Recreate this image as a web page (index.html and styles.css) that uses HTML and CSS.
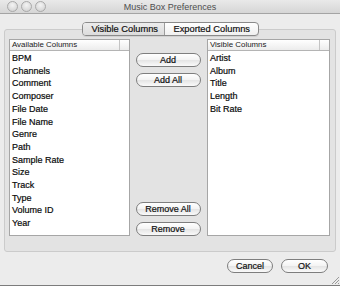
FILE: index.html
```html
<!DOCTYPE html>
<html lang="en">

<head>
    <meta charset="UTF-8">
    <meta name="viewport" content="width=device-width, initial-scale=1.0">
    <title>Music Box Preferences</title>
    <link rel="stylesheet" href="styles.css">
</head>

<body>
    <div class="window">
        <div class="titlebar">
            <div class="lights">
                <span class="light"></span>
                <span class="light"></span>
                <span class="light"></span>
            </div>
            <div class="title">Music Box Preferences</div>
        </div>

        <div class="tabs-row">
            <div class="tabs">
                <div class="tab selected">Visible Columns</div>
                <div class="tab">Exported Columns</div>
            </div>
        </div>

        <div class="group">
            <div class="list">
                <div class="list-head">
                    <span class="head-label">Available Columns</span>
                    <span class="head-corner"></span>
                </div>
                <div class="list-body">
                    <div>BPM</div>
                    <div>Channels</div>
                    <div>Comment</div>
                    <div>Composer</div>
                    <div>File Date</div>
                    <div>File Name</div>
                    <div>Genre</div>
                    <div>Path</div>
                    <div>Sample Rate</div>
                    <div>Size</div>
                    <div>Track</div>
                    <div>Type</div>
                    <div>Volume ID</div>
                    <div>Year</div>
                </div>
            </div>

            <div class="actions">
                <div class="action-group">
                    <button class="btn">Add</button>
                    <button class="btn">Add All</button>
                </div>
                <div class="action-group">
                    <button class="btn">Remove All</button>
                    <button class="btn">Remove</button>
                </div>
            </div>

            <div class="list">
                <div class="list-head">
                    <span class="head-label">Visible Columns</span>
                    <span class="head-corner"></span>
                </div>
                <div class="list-body">
                    <div>Artist</div>
                    <div>Album</div>
                    <div>Title</div>
                    <div>Length</div>
                    <div>Bit Rate</div>
                </div>
            </div>
        </div>

        <div class="footer">
            <button class="btn small">Cancel</button>
            <button class="btn small">OK</button>
        </div>

        <svg class="grip" width="9" height="9" viewBox="0 0 9 9">
            <path d="M1 8 L8 1 M4 8 L8 4 M7 8 L8 7" stroke="#9a9a9a" stroke-width="1" fill="none"/>
        </svg>
    </div>
</body>

</html>
```

FILE: styles.css
```css
html,
body {
    padding: 0;
    margin: 0;
}

body {
    width: 340px;
    height: 286px;
    overflow: hidden;
    background-color: #ececec;
    font-family: "Liberation Sans", Arial, sans-serif;
    color: #111;
}

.window {
    position: relative;
    height: 285px;
    border-bottom: 1px solid #7c7c7c;
    display: flex;
    flex-direction: column;
}

.titlebar {
    position: relative;
    height: 13px;
    background: linear-gradient(#e9e9e9, #d6d6d6);
    border-bottom: 1px solid #a4a4a4;
    display: flex;
    align-items: center;
}

.lights {
    display: flex;
    gap: 3px;
    padding-left: 7px;
}

.light {
    width: 9px;
    height: 9px;
    border-radius: 50%;
    border: 1px solid #a9a9a9;
    background: radial-gradient(circle at 50% 35%, #f4f4f4, #cdcdcd);
    box-sizing: content-box;
}

.title {
    position: absolute;
    left: 0;
    right: 0;
    top: 1px;
    text-align: center;
    font-size: 9px;
    line-height: 12px;
    color: #4e4e4e;
}

.tabs-row {
    display: flex;
    justify-content: center;
    margin-top: 8px;
    margin-bottom: -7px;
    position: relative;
    z-index: 1;
}

.tabs {
    display: flex;
    height: 12px;
    border: 1px solid #8a8a8a;
    border-radius: 4px;
    overflow: hidden;
    background: linear-gradient(#ffffff, #f0f0f0);
    box-shadow: 0 1px 0 rgba(0, 0, 0, 0.08);
}

.tab {
    font-size: 9.3px;
    line-height: 12px;
    padding: 0 0 0 9px;
    color: #111;
    -webkit-text-stroke: 0.2px #111;
}

.tab.selected {
    width: 72px;
    background: linear-gradient(#ececec, #dcdcdc);
    border-right: 1px solid #9c9c9c;
}

.tab:last-child {
    width: 84px;
    padding-left: 9px;
}

.group {
    margin: 0 4px;
    height: 212px;
    border: 1px solid #cbcbcb;
    border-radius: 3px;
    background-color: #e3e3e3;
    padding: 9px 5px 0 4px;
    display: grid;
    grid-template-columns: 121px 1fr 123px;
}

.list {
    height: 195px;
    border: 1px solid #a6a6a6;
    background-color: #fff;
    display: flex;
    flex-direction: column;
}

.list-head {
    height: 10px;
    display: flex;
    background: linear-gradient(#ffffff, #ececec);
    border-bottom: 1px solid #b4b4b4;
}

.head-label {
    flex: 1;
    font-size: 7.9px;
    line-height: 10px;
    padding-left: 2px;
    color: #1a1a1a;
    border-right: 1px solid #c4c4c4;
}

.head-corner {
    width: 9px;
}

.list-body {
    padding: 1px 0 0 2px;
    font-size: 9px;
    line-height: 12.7px;
    color: #0a0a0a;
    -webkit-text-stroke: 0.2px #0a0a0a;
}

.actions {
    height: 197px;
    display: flex;
    flex-direction: column;
    justify-content: space-between;
    align-items: center;
    padding-top: 14px;
    box-sizing: border-box;
    padding-right: 1px;
}

.action-group {
    display: flex;
    flex-direction: column;
    gap: 6px;
}

.btn {
    width: 65px;
    height: 14px;
    padding: 0;
    border: 1px solid #7e7e7e;
    border-radius: 7px;
    background: linear-gradient(#ffffff 0%, #f3f3f3 50%, #e4e4e4 51%, #fafafa 100%);
    font-family: "Liberation Sans", Arial, sans-serif;
    font-size: 9px;
    line-height: 12px;
    color: #111;
    -webkit-text-stroke: 0.2px #111;
}

.footer {
    display: flex;
    justify-content: flex-end;
    gap: 8px;
    padding: 7px 12px 0 0;
}

.btn.small {
    width: 46px;
}

.btn.small:last-child {
    width: 47px;
}

.grip {
    position: absolute;
    right: 0;
    bottom: 0;
}
```
